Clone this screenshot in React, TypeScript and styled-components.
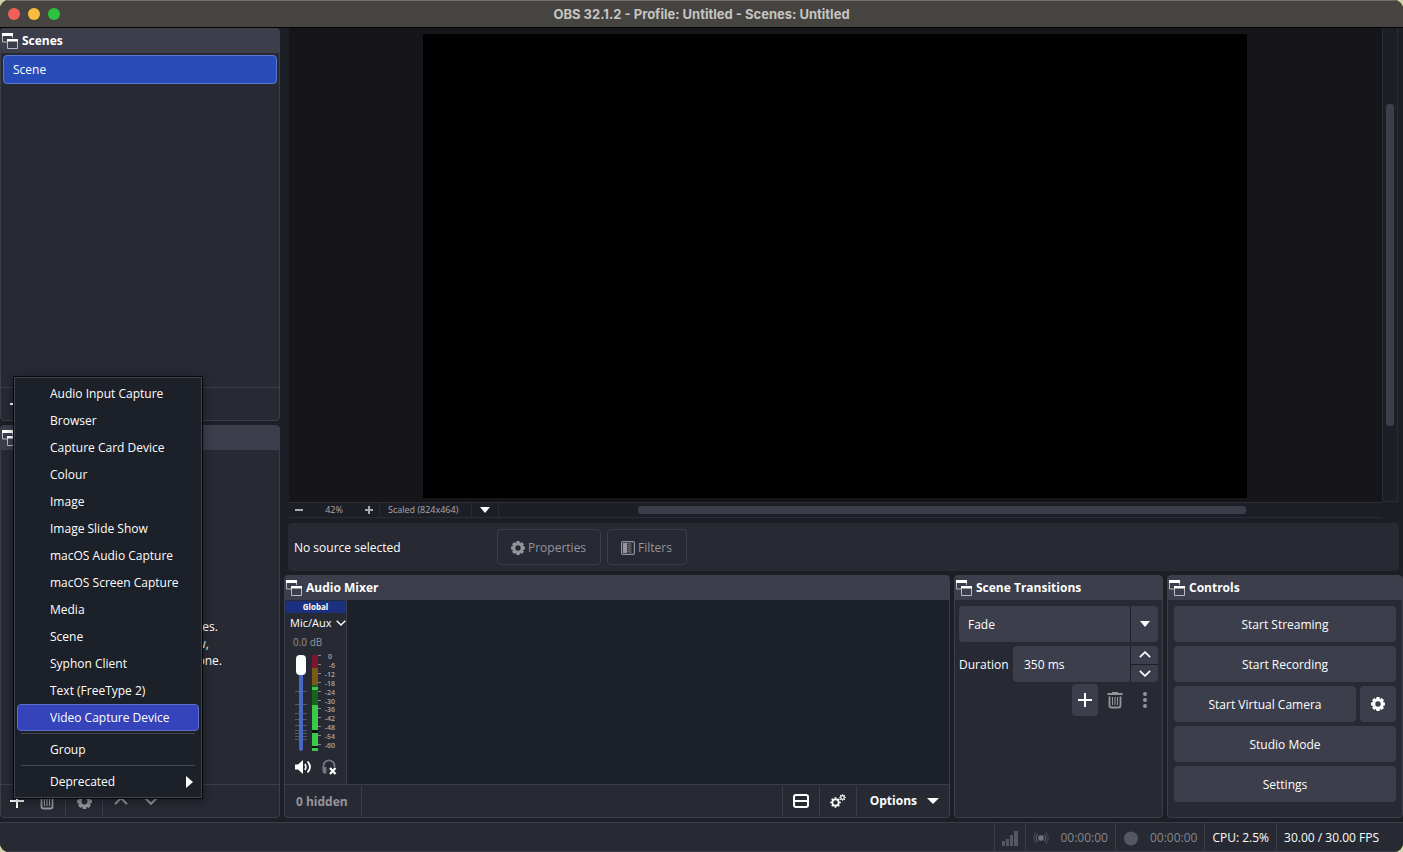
import React from "react";
import styled, { createGlobalStyle, css } from "styled-components";

const color = {
  window: "#1d1f27",
  base: "#272a33",
  raised: "#3c3e4c",
  line: "#3c3f4a",
  faint: "#2a2d35",
  deep: "#1c2028",
  text: "#fefefe",
  muted: "#94959b",
};

const GlobalStyle = createGlobalStyle`
  * { box-sizing: border-box; }
  body {
    margin: 0;
    background: #cfd2a4;
    color: ${color.text};
    font: 12px/16px "Open Sans", "Noto Sans", sans-serif;
  }
  button, input, select { font: inherit; color: inherit; margin: 0; }
  svg { display: block; flex: none; }
`;

/* ---------- window frame ---------- */

const Window = styled.div`
  display: flex;
  flex-direction: column;
  height: 100vh;
  min-height: 720px;
  background: ${color.window};
  border-radius: 9px;
  overflow: hidden;
`;

const TitleBar = styled.header`
  display: grid;
  grid-template-columns: 1fr auto 1fr;
  align-items: center;
  height: 28px;
  flex: none;
  padding: 0 8px;
  background: #454440;
  box-shadow: inset 0 1px 0 #6f6e69;
  border-bottom: 1px solid #050507;
`;

const Title = styled.h1`
  margin: 0;
  font: 700 13px/16px Inter, "Liberation Sans", sans-serif;
  color: #c6c5c2;
`;

const Lights = styled.div`
  display: flex;
  gap: 8px;
`;

const Light = styled.button<{ $fill: string }>`
  width: 12px;
  height: 12px;
  padding: 0;
  border: 0;
  border-radius: 50%;
  background: ${(p) => p.$fill};
`;

const Body = styled.div`
  display: flex;
  flex: 1;
  min-height: 0;
  gap: 4px;
`;

const LeftColumn = styled.aside`
  display: flex;
  flex-direction: column;
  width: 280px;
  flex: none;
  gap: 4px;
  padding-bottom: 4px;
`;

const MainColumn = styled.main`
  display: flex;
  flex-direction: column;
  flex: 1;
  min-width: 0;
  padding-bottom: 4px;
`;

/* ---------- docks ---------- */

const DockFrame = styled.section<{ $size?: string }>`
  position: relative;
  display: flex;
  flex-direction: column;
  flex: ${(p) => p.$size ?? "1 1 0px"};
  min-width: 0;
  min-height: 0;
  background: ${color.base};
  border: 1px solid ${color.line};
  border-radius: 4px;
`;

const DockHeader = styled.header`
  display: flex;
  align-items: center;
  gap: 4px;
  height: 24px;
  flex: none;
  padding-left: 1px;
  background: ${color.raised};
`;

const DockTitle = styled.h2`
  margin: 0;
  font-size: 12px;
  line-height: 16px;
  font-weight: 700;
`;

const DockBody = styled.div<{ $dark?: boolean }>`
  flex: 1;
  min-height: 0;
  padding: ${(p) => (p.$dark ? "0" : "2px")};
  background: ${(p) => (p.$dark ? color.deep : "transparent")};
`;

const DockToolbar = styled.footer`
  display: flex;
  align-items: center;
  height: 33px;
  flex: none;
  border-top: 1px solid ${color.line};
  padding: 0 2px 0 3px;
`;

const Divider = styled.span`
  width: 1px;
  height: 30px;
  margin: 0 5px;
  background: ${color.line};
`;

const IconButton = styled.button<{ $raised?: boolean; $dim?: boolean }>`
  display: flex;
  align-items: center;
  justify-content: center;
  width: 26px;
  height: ${(p) => (p.$raised ? "32px" : "26px")};
  padding: 0;
  border: 0;
  border-radius: 4px;
  background: ${(p) => (p.$raised ? color.raised : "transparent")};
  color: ${(p) => (p.$dim ? color.muted : color.text)};
`;

const ButtonGroup = styled.div`
  display: flex;
  align-items: center;
  gap: 4px;
`;

const SceneItem = styled.button`
  display: block;
  width: 100%;
  height: 29px;
  padding: 0 9px;
  text-align: left;
  background: #284cb8;
  border: 1px solid #5878cf;
  border-radius: 4px;
`;

const EmptyHint = styled.p`
  display: flex;
  flex-direction: column;
  align-items: center;
  justify-content: center;
  height: 100%;
  margin: 0;
  padding-top: 52px;
  line-height: 17px;
  white-space: nowrap;
`;

/* ---------- add-source menu ---------- */

const Menu = styled.ul`
  position: absolute;
  left: 12px;
  bottom: 18px;
  z-index: 2;
  width: 190px;
  margin: 0;
  padding: 3px;
  list-style: none;
  background: ${color.deep};
  border: 1px solid #050608;
  box-shadow: inset 0 0 0 1px #40434c, 0 2px 8px rgba(0, 0, 0, 0.4);
`;

const MenuItem = styled.button<{ $active?: boolean }>`
  display: flex;
  align-items: center;
  justify-content: space-between;
  width: 100%;
  height: 27px;
  padding: 0 5px 0 32px;
  text-align: left;
  border: 1px solid transparent;
  border-radius: 4px;
  background: transparent;
  ${(p) =>
    p.$active &&
    css`
      background: #3544bb;
      border-color: #5f6bcf;
    `}
`;

const MenuRule = styled.li`
  height: 1px;
  margin: 2px 4px;
  background: #454851;
`;

/* ---------- preview ---------- */

const PreviewArea = styled.div`
  display: grid;
  grid-template-columns: 1fr 16px;
  grid-template-rows: 1fr 16px;
  flex: 1;
  min-height: 0;
  margin: 0 5px;
`;

const Stage = styled.div`
  display: flex;
  justify-content: center;
  min-width: 0;
  min-height: 0;
  padding: 6px 1px 4px 0;
  background: #15151a;
  overflow: hidden;
`;

const Canvas = styled.div`
  height: 100%;
  aspect-ratio: 824 / 464;
  background: #000;
`;

const VerticalScroll = styled.div`
  border: 1px solid ${color.faint};
  border-top: 0;
  padding: 76px 3px 0;
`;

const Thumb = styled.div<{ $vertical?: boolean }>`
  width: ${(p) => (p.$vertical ? "8px" : "100%")};
  height: ${(p) => (p.$vertical ? "81%" : "8px")};
  border-radius: 3px;
  background: ${color.raised};
`;

const ZoomBar = styled.div`
  display: flex;
  align-items: stretch;
  border: solid ${color.faint};
  border-width: 1px 0;
  font-size: 9px;
  line-height: 14px;
  color: #a9aab0;
`;

const ZoomButton = styled.button`
  display: flex;
  align-items: center;
  justify-content: center;
  width: 20px;
  padding: 0;
  border: 0;
  background: transparent;
`;

const ZoomValue = styled.output`
  width: 50px;
  text-align: center;
`;

const ScaleMode = styled.div`
  position: relative;
  display: flex;
  width: 120px;
  border: solid ${color.faint};
  border-width: 0 1px;
`;

const ScaleSelect = styled.select`
  appearance: none;
  width: 100%;
  padding: 0 0 0 8px;
  border: 0;
  background: transparent;
`;

const SelectArrow = styled.span<{ $width: string; $line: string }>`
  position: absolute;
  inset: 0 0 0 auto;
  display: flex;
  align-items: center;
  justify-content: center;
  width: ${(p) => p.$width};
  border-left: 1px solid ${(p) => p.$line};
  color: ${color.text};
  pointer-events: none;
`;

const HorizontalTrack = styled.div`
  display: flex;
  flex: 1;
  align-items: center;
  padding-left: 139px;
  padding-right: 136px;
`;

const ContextBar = styled.div`
  display: flex;
  align-items: center;
  height: 48px;
  flex: none;
  margin: 5px 4px 4px;
  padding: 0 6px;
  background: ${color.base};
  border-radius: 4px;
`;

const ContextLabel = styled.span`
  width: 203px;
  padding-top: 2px;
`;

const ContextButton = styled.button`
  display: flex;
  align-items: center;
  gap: 3px;
  height: 36px;
  margin-right: 6px;
  padding: 1px 14px 0 13px;
  border: 1px solid ${color.line};
  border-radius: 4px;
  background: transparent;
  color: ${color.muted};
`;

const BottomDocks = styled.div`
  display: flex;
  gap: 4px;
  height: 243px;
  flex: none;
`;

/* ---------- mixer ---------- */

const Strip = styled.div`
  display: flex;
  flex-direction: column;
  width: 62px;
  height: 100%;
  padding-top: 1px;
  background: ${color.base};
  border-right: 1px solid ${color.line};
`;

const StripTag = styled.span`
  height: 12px;
  background: #1b3180;
  font-size: 8px;
  line-height: 12px;
  font-weight: 700;
  text-align: center;
`;

const StripName = styled.button`
  display: flex;
  align-items: center;
  justify-content: space-between;
  height: 20px;
  padding: 0 0 0 5px;
  border: 0;
  background: transparent;
  font-size: 11px;
  line-height: 16px;
`;

const StripLevel = styled.span`
  height: 21px;
  padding-left: 8px;
  font-size: 10px;
  line-height: 18px;
  color: ${color.muted};
`;

const Meters = styled.div`
  position: relative;
  display: flex;
  height: 100px;
  padding-left: 10px;
`;

const Fader = styled.input`
  position: absolute;
  left: 10px;
  top: 1px;
  appearance: none;
  writing-mode: vertical-lr;
  direction: rtl;
  width: 12px;
  height: 96px;
  background: transparent;
  &::-webkit-slider-runnable-track {
    width: 4px;
    height: 96px;
    border-radius: 2px;
    background: #4967c9;
  }
  &::-webkit-slider-thumb {
    appearance: none;
    width: 10px;
    height: 20px;
    margin-left: -3px;
    border-radius: 4px;
    background: #fff;
  }
`;

const StripActions = styled.div`
  display: flex;
  padding-left: 5px;
`;

const Hidden = styled.button`
  height: 30px;
  padding: 2px 8px 0;
  border: 0;
  background: transparent;
  color: ${color.muted};
  font-weight: 700;
`;

const Spacer = styled.span`
  flex: 1;
`;

const Options = styled.button`
  display: flex;
  align-items: center;
  gap: 10px;
  padding: 0 8px;
  border: 0;
  background: transparent;
  font-weight: 700;
`;

/* ---------- transitions and controls ---------- */

const Form = styled.div`
  display: flex;
  flex-direction: column;
  gap: 4px;
  padding: 4px 2px;
`;

const Field = styled.div`
  position: relative;
  display: flex;
  flex: 1;
  min-width: 0;
  height: 36px;
  background: ${color.raised};
  border-radius: 4px;
`;

const FieldSelect = styled.select`
  appearance: none;
  width: 100%;
  padding: 2px 36px 0 9px;
  border: 0;
  background: transparent;
`;

const FieldInput = styled.input`
  flex: 1;
  min-width: 0;
  padding: 2px 10px 0 11px;
  border: 0;
  background: transparent;
`;

const Row = styled.div<{ $end?: boolean }>`
  display: flex;
  align-items: center;
  ${(p) => p.$end && "justify-content: flex-end; margin-top: -2px;"}
`;

const FieldLabel = styled.label`
  width: 54px;
  padding-top: 2px;
`;

const Stepper = styled.div`
  display: flex;
  flex-direction: column;
  width: 28px;
  border-left: 1px solid ${color.window};
`;

const StepButton = styled.button`
  display: flex;
  flex: 1;
  align-items: center;
  justify-content: center;
  padding: 0;
  border: 0;
  background: transparent;
  & + & { border-top: 1px solid ${color.window}; }
`;

const ControlList = styled(Form)`
  padding: 4px 4px;
`;

const ControlRow = styled.div`
  display: flex;
  gap: 4px;
`;

const ControlButton = styled.button<{ $square?: boolean }>`
  display: flex;
  align-items: center;
  justify-content: center;
  flex: ${(p) => (p.$square ? "0 0 36px" : "1")};
  height: 36px;
  padding: ${(p) => (p.$square ? "0" : "2px 0 0")};
  border: 0;
  border-radius: 4px;
  background: ${color.raised};
`;

/* ---------- status bar ---------- */

const StatusBar = styled.footer`
  display: flex;
  justify-content: flex-end;
  height: 30px;
  flex: none;
  padding-right: 17px;
  background: ${color.base};
  border-top: 1px solid ${color.line};
  border-bottom: 1px solid ${color.line};
`;

const StatusCell = styled.div<{ $dim?: boolean }>`
  display: flex;
  align-items: center;
  gap: 11px;
  padding: 2px 7px 0;
  border-left: 1px solid ${color.line};
  color: ${(p) => (p.$dim ? "#85868d" : color.text)};
`;

/* ---------- icons ---------- */

const WindowsIcon = () => (
  <svg width="16" height="16" viewBox="0 0 16 16" fill="none" aria-hidden="true">
    <path d="M.5 1v8H5M10.5 1v4" stroke="#b9bac4" />
    <path d="M0 0h11v3H0z" fill="#fff" />
    <path d="M5.5 7v8.500h10V7" stroke="#b9bac4" />
    <path d="M5 6h11v2.500H5z" fill="#fff" />
  </svg>
);

const Plus = ({ size = 14, weight = 2 }: { size?: number; weight?: number }) => (
  <svg width={size} height={size} viewBox={`0 0 ${size} ${size}`} aria-hidden="true">
    <path d={`M0 ${size / 2}h${size}M${size / 2} 0v${size}`} stroke="currentColor" strokeWidth={weight} />
  </svg>
);

const Minus = () => (
  <svg width="8" height="8" viewBox="0 0 8 8" aria-hidden="true">
    <path d="M0 4h8" stroke="currentColor" strokeWidth="2" />
  </svg>
);

const Trash = () => (
  <svg width="16" height="17" viewBox="0 0 16 17" fill="none" stroke="currentColor" aria-hidden="true">
    <path d="M0.500 2h15" strokeWidth="2" />
    <path d="M5 .6h6" strokeWidth="1.200" />
    <path d="M2.500 4.500v9q0 2 2 2h7q2 0 2-2v-9" strokeWidth="1.800" />
    <path d="M5.500 5v8M8 5v8M10.500 5v8" strokeWidth="1.100" />
  </svg>
);

const gearAngles = [0, 45, 90, 135, 180, 225, 270, 315];

const Gear = ({ size = 14 }: { size?: number }) => (
  <svg width={size} height={size} viewBox="-8 -8 16 16" aria-hidden="true">
    <circle r="4.700" fill="none" stroke="currentColor" strokeWidth="3.200" />
    {gearAngles.map((a) => (
      <path key={a} d="M-2.200 -5L-1.800 -7.900H1.800L2.200 -5z" fill="currentColor" transform={`rotate(${a})`} />
    ))}
  </svg>
);

const Gears = () => (
  <svg width="16" height="14" viewBox="0 0 16 14" fill="none" stroke="currentColor" aria-hidden="true">
    <circle cx="5.500" cy="8.500" r="3.200" strokeWidth="1.800" />
    {gearAngles.map((a) => (
      <path key={a} d="M5.500 4.900v-1.700" strokeWidth="1.700" transform={`rotate(${a} 5.500 8.500)`} />
    ))}
    <circle cx="12.500" cy="3.500" r="1.800" strokeWidth="1.200" />
    {gearAngles.map((a) => (
      <path key={a} d="M12.500 1.400v-1.100" strokeWidth="1.100" transform={`rotate(${a} 12.500 3.500)`} />
    ))}
  </svg>
);

const Chevron = ({ up, width = 14 }: { up?: boolean; width?: number }) => (
  <svg width={width} height={width / 2 + 1} viewBox="0 0 14 8" fill="none" aria-hidden="true">
    <path d={up ? "M1 7L7 1.200L13 7" : "M1 1L7 6.800L13 1"} stroke="currentColor" strokeWidth="2" />
  </svg>
);

const Caret = ({ width = 10 }: { width?: number }) => (
  <svg width={width} height="6" viewBox="0 0 10 6" preserveAspectRatio="none" aria-hidden="true">
    <path d="M0 0h10L5 6z" fill="currentColor" />
  </svg>
);

const Submenu = () => (
  <svg width="7" height="12" viewBox="0 0 7 12" aria-hidden="true">
    <path d="M0 0l7 6l-7 6z" fill="currentColor" />
  </svg>
);

const Dots = () => (
  <svg width="4" height="16" viewBox="0 0 4 16" fill="currentColor" aria-hidden="true">
    <circle cx="2" cy="2" r="2" />
    <circle cx="2" cy="8" r="2" />
    <circle cx="2" cy="14" r="2" />
  </svg>
);

const FilterIcon = () => (
  <svg width="14" height="14" viewBox="0 0 14 14" fill="none" aria-hidden="true">
    <rect x=".6" y=".6" width="12.800" height="12.800" rx="1.500" stroke="currentColor" strokeWidth="1.200" />
    <path d="M2 2h4v10H2z" fill="currentColor" />
    <path d="M7 2v10M9 2v10" stroke="currentColor" strokeDasharray="1 1" />
    <path d="M8 3v9M10 3v9" stroke="currentColor" strokeDasharray="1 1" opacity=".7" />
  </svg>
);

const LayoutIcon = () => (
  <svg width="16" height="14" viewBox="0 0 16 14" fill="none" stroke="currentColor" strokeWidth="2" aria-hidden="true">
    <rect x="1" y="1" width="14" height="12" rx="2" />
    <path d="M1 7h14" />
  </svg>
);

const Speaker = () => (
  <svg width="17" height="14" viewBox="0 0 17 14" fill="none" stroke="currentColor" aria-hidden="true">
    <path d="M0 4.500h3L8 0v14L3 9.500H0z" fill="currentColor" stroke="none" />
    <path d="M10 4q1.800 3 0 6" strokeWidth="1.600" />
    <path d="M12.500 1.500q5 5.500 0 11" strokeWidth="1.800" />
  </svg>
);

const Headphones = () => (
  <svg width="15" height="16" viewBox="0 0 15 16" fill="none" aria-hidden="true">
    <path d="M1.500 9V6.800a5.500 5.500 0 0 1 11 0V8" stroke="#777980" strokeWidth="1.800" />
    <path d="M.6 8h3.800v6.500H2.600q-2 0-2-2z" fill="#777980" />
    <path d="M8 9l5.500 6M13.500 9L8 15" stroke="#fff" strokeWidth="2.200" />
  </svg>
);

const Signal = () => (
  <svg width="16" height="15" viewBox="0 0 16 15" fill="#555761" aria-hidden="true">
    <path d="M0 10h3v5H0zM4 8h3v7H4zM8 4h3v11H8zM12 0h4v15h-4z" />
  </svg>
);

const Broadcast = () => (
  <svg width="16" height="16" viewBox="0 0 16 16" fill="none" stroke="#555761" aria-hidden="true">
    <circle cx="8" cy="8" r="2.800" fill="#73757e" stroke="none" />
    <path d="M4.700 4.200q-3 3.800 0 7.600M11.300 4.200q3 3.800 0 7.600" strokeWidth="1.300" />
    <path d="M3 2q-4.500 6 0 12M13 2q4.500 6 0 12" strokeWidth="1" opacity=".7" />
  </svg>
);

const RecordDot = () => (
  <svg width="16" height="15" viewBox="0 0 16 15" aria-hidden="true">
    <circle cx="8" cy="7.500" r="7" fill="#555761" />
  </svg>
);

const faderTicks = [37, 50, 59, 65, 71, 76, 79, 82, 85];
const scale = [0, -6, -12, -18, -24, -30, -36, -42, -48, -54, -60];

const LevelMeter = () => (
  <svg width="46" height="100" viewBox="0 0 46 100" aria-hidden="true">
    {faderTicks.map((y) => (
      <path key={y} d={`M0 ${y}.500h12`} stroke="#555a6b" />
    ))}
    <path d="M17 1h6v13h-6z" fill="#7d1430" />
    <path d="M17 14h6v17h-6z" fill="#7a5a14" />
    <path d="M17 31h6v20h-6z" fill="#17641f" />
    <path d="M17 33h6v3h-6zM17 51h6v25h-6zM17 79h6v13h-6zM17 94h6v3h-6z" fill="#3cc94a" />
    <path d="M17 76h6v3h-6zM17 92h6v2h-6z" fill="#0c1712" />
    {scale.map((v, i) => {
      const y = 1 + Math.round(i * 8.9);
      return (
        <React.Fragment key={v}>
          <path d={`M23 ${y}.500h3`} stroke="#85868d" />
          <text x={i === 0 ? 33 : 40} y={y + 4} fontSize="7" fontWeight="600" fill="#a5a6ac" textAnchor={i === 0 ? "start" : "end"}>
            {v}
          </text>
        </React.Fragment>
      );
    })}
  </svg>
);

/* ---------- composition ---------- */

function Dock({ title, size, children }: { title: string; size?: string; children: React.ReactNode }) {
  return (
    <DockFrame $size={size} aria-label={title}>
      <DockHeader>
        <WindowsIcon />
        <DockTitle>{title}</DockTitle>
      </DockHeader>
      {children}
    </DockFrame>
  );
}

function ListTools() {
  return (
    <DockToolbar>
      <ButtonGroup>
        <IconButton aria-label="Add"><Plus /></IconButton>
        <IconButton aria-label="Remove" $dim><Trash /></IconButton>
      </ButtonGroup>
      <Divider />
      <IconButton aria-label="Properties" $dim><Gear size={15} /></IconButton>
      <Divider />
      <ButtonGroup>
        <IconButton aria-label="Move up" $dim><Chevron up /></IconButton>
        <IconButton aria-label="Move down" $dim><Chevron /></IconButton>
      </ButtonGroup>
    </DockToolbar>
  );
}

const sourceTypes = [
  "Audio Input Capture",
  "Browser",
  "Capture Card Device",
  "Colour",
  "Image",
  "Image Slide Show",
  "macOS Audio Capture",
  "macOS Screen Capture",
  "Media",
  "Scene",
  "Syphon Client",
  "Text (FreeType 2)",
  "Video Capture Device",
];

function AddSourceMenu() {
  return (
    <Menu>
      {sourceTypes.map((name) => (
        <li key={name}>
          <MenuItem $active={name === "Video Capture Device"}>{name}</MenuItem>
        </li>
      ))}
      <MenuRule />
      <li><MenuItem>Group</MenuItem></li>
      <MenuRule />
      <li><MenuItem>Deprecated<Submenu /></MenuItem></li>
    </Menu>
  );
}

function Preview() {
  return (
    <PreviewArea>
      <Stage><Canvas /></Stage>
      <VerticalScroll><Thumb $vertical /></VerticalScroll>
      <ZoomBar>
        <ZoomButton aria-label="Zoom out"><Minus /></ZoomButton>
        <ZoomValue>42%</ZoomValue>
        <ZoomButton aria-label="Zoom in"><Plus size={8} /></ZoomButton>
        <ScaleMode>
          <ScaleSelect aria-label="Preview scaling">
            <option>Scaled (824x464)</option>
          </ScaleSelect>
          <SelectArrow $width="27px" $line={color.faint}><Caret /></SelectArrow>
        </ScaleMode>
        <HorizontalTrack><Thumb /></HorizontalTrack>
      </ZoomBar>
    </PreviewArea>
  );
}

function Mixer() {
  return (
    <Dock title="Audio Mixer">
      <DockBody $dark>
        <Strip>
          <StripTag>Global</StripTag>
          <StripName>Mic/Aux<Chevron width={10} /></StripName>
          <StripLevel>0.0 dB</StripLevel>
          <Meters>
            <LevelMeter />
            <Fader type="range" aria-label="Mic/Aux volume" min={0} max={100} defaultValue={100} />
          </Meters>
          <StripActions>
            <IconButton aria-label="Mute"><Speaker /></IconButton>
            <IconButton aria-label="Monitor"><Headphones /></IconButton>
          </StripActions>
        </Strip>
      </DockBody>
      <DockToolbar>
        <Hidden>0 hidden</Hidden>
        <Divider />
        <Spacer />
        <Divider />
        <IconButton aria-label="Mixer layout"><LayoutIcon /></IconButton>
        <Divider />
        <IconButton aria-label="Advanced audio"><Gears /></IconButton>
        <Divider />
        <Options>Options<Caret width={12} /></Options>
      </DockToolbar>
    </Dock>
  );
}

function Transitions() {
  return (
    <Dock title="Scene Transitions" size="0 0 209px">
      <DockBody>
        <Form>
          <Row>
            <Field>
              <FieldSelect aria-label="Transition"><option>Fade</option></FieldSelect>
              <SelectArrow $width="28px" $line={color.window}><Caret /></SelectArrow>
            </Field>
          </Row>
          <Row>
            <FieldLabel htmlFor="duration">Duration</FieldLabel>
            <Field>
              <FieldInput id="duration" defaultValue="350 ms" />
              <Stepper>
                <StepButton aria-label="Increase"><Chevron up width={12} /></StepButton>
                <StepButton aria-label="Decrease"><Chevron width={12} /></StepButton>
              </Stepper>
            </Field>
          </Row>
          <Row $end>
            <ButtonGroup>
              <IconButton $raised aria-label="Add transition"><Plus /></IconButton>
              <IconButton $dim aria-label="Remove transition"><Trash /></IconButton>
              <IconButton $dim aria-label="Transition menu"><Dots /></IconButton>
            </ButtonGroup>
          </Row>
        </Form>
      </DockBody>
    </Dock>
  );
}

function Controls() {
  return (
    <Dock title="Controls" size="0 0 236px">
      <DockBody>
        <ControlList>
          <ControlRow><ControlButton>Start Streaming</ControlButton></ControlRow>
          <ControlRow><ControlButton>Start Recording</ControlButton></ControlRow>
          <ControlRow>
            <ControlButton>Start Virtual Camera</ControlButton>
            <ControlButton $square aria-label="Virtual camera settings"><Gear /></ControlButton>
          </ControlRow>
          <ControlRow><ControlButton>Studio Mode</ControlButton></ControlRow>
          <ControlRow><ControlButton>Settings</ControlButton></ControlRow>
        </ControlList>
      </DockBody>
    </Dock>
  );
}

export default function App() {
  return (
    <>
      <GlobalStyle />
      <Window>
        <TitleBar>
          <Lights>
            <Light $fill="#f1605a" aria-label="Close" />
            <Light $fill="#fbbb3c" aria-label="Minimise" />
            <Light $fill="#2dc33f" aria-label="Zoom" />
          </Lights>
          <Title>OBS 32.1.2 - Profile: Untitled - Scenes: Untitled</Title>
        </TitleBar>
        <Body>
          <LeftColumn>
            <Dock title="Scenes" size="1 1 2px">
              <DockBody><SceneItem>Scene</SceneItem></DockBody>
              <ListTools />
            </Dock>
            <Dock title="Sources">
              <DockBody>
                <EmptyHint>
                  <span>You don't have any sources.</span>
                  <span>Click the + button below,</span>
                  <span>or right click here to add one.</span>
                </EmptyHint>
              </DockBody>
              <ListTools />
              <AddSourceMenu />
            </Dock>
          </LeftColumn>
          <MainColumn>
            <Preview />
            <ContextBar>
              <ContextLabel>No source selected</ContextLabel>
              <ContextButton><Gear />Properties</ContextButton>
              <ContextButton><FilterIcon />Filters</ContextButton>
            </ContextBar>
            <BottomDocks>
              <Mixer />
              <Transitions />
              <Controls />
            </BottomDocks>
          </MainColumn>
        </Body>
        <StatusBar>
          <StatusCell><Signal /></StatusCell>
          <StatusCell $dim><Broadcast />00:00:00</StatusCell>
          <StatusCell $dim><RecordDot />00:00:00</StatusCell>
          <StatusCell>CPU: 2.5%</StatusCell>
          <StatusCell>30.00 / 30.00 FPS</StatusCell>
        </StatusBar>
      </Window>
    </>
  );
}
